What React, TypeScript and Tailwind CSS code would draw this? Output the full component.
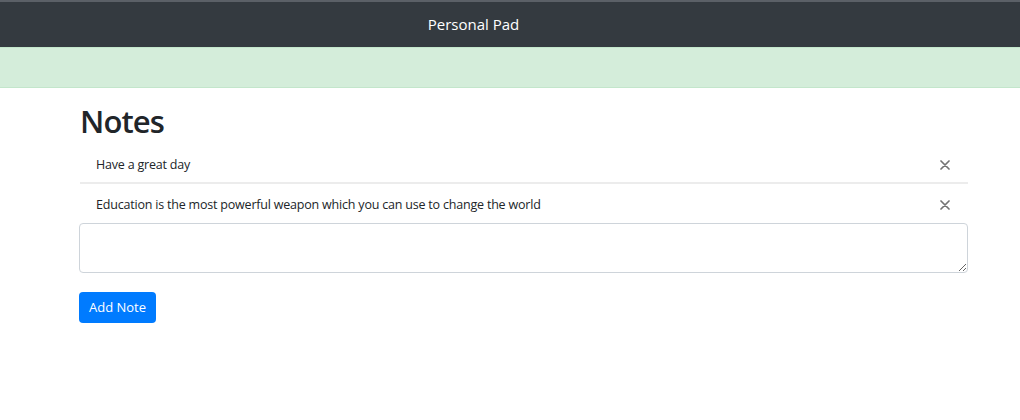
const notes = [
  "Have a great day",
  "Education is the most powerful weapon which you can use to change the world",
];

function CloseIcon() {
  return (
    <svg width="10" height="10" viewBox="0 0 10 10" className="text-[#737373]">
      <path d="M1 1L9 9M9 1L1 9" stroke="currentColor" strokeWidth="1.7" strokeLinecap="round" />
    </svg>
  );
}

export default function App() {
  return (
    <div className="min-h-[420px] bg-white font-['Open_Sans',sans-serif] text-[#212529]">
      <nav className="h-[47px] border-t-2 border-[#5b6067] bg-[#343a40] flex items-center justify-center pr-[73px]">
        <span className="text-[15px] text-white">Personal Pad</span>
      </nav>
      <div className="h-[41px] border-y border-[#c3e6cb] bg-[#d4edda]" />

      <main className="ml-[79px] w-[889px] pt-[13px]">
        <h2 className="pl-[1px] text-[31px] font-semibold leading-[40px] tracking-[-0.9px]">Notes</h2>

        <ul className="mt-[4px]">
          {notes.map((note, i) => (
            <li
              key={i}
              className={
                "ml-[1px] flex h-[39px] items-center justify-between pl-[16px] pr-[18px] pt-[3px] text-[12.5px] tracking-[-0.2px] " +
                (i === 0 ? "border-b-2 border-[#ececec]" : "")
              }
            >
              <span>{note}</span>
              <button className="flex items-center">
                <CloseIcon />
              </button>
            </li>
          ))}
        </ul>

        <textarea className="block h-[50px] w-full rounded border border-[#ced4da] bg-white" />

        <button className="mt-[19px] h-[31px] rounded bg-[#007bff] px-[10px] text-[13px] text-white">
          Add Note
        </button>
      </main>
    </div>
  );
}
